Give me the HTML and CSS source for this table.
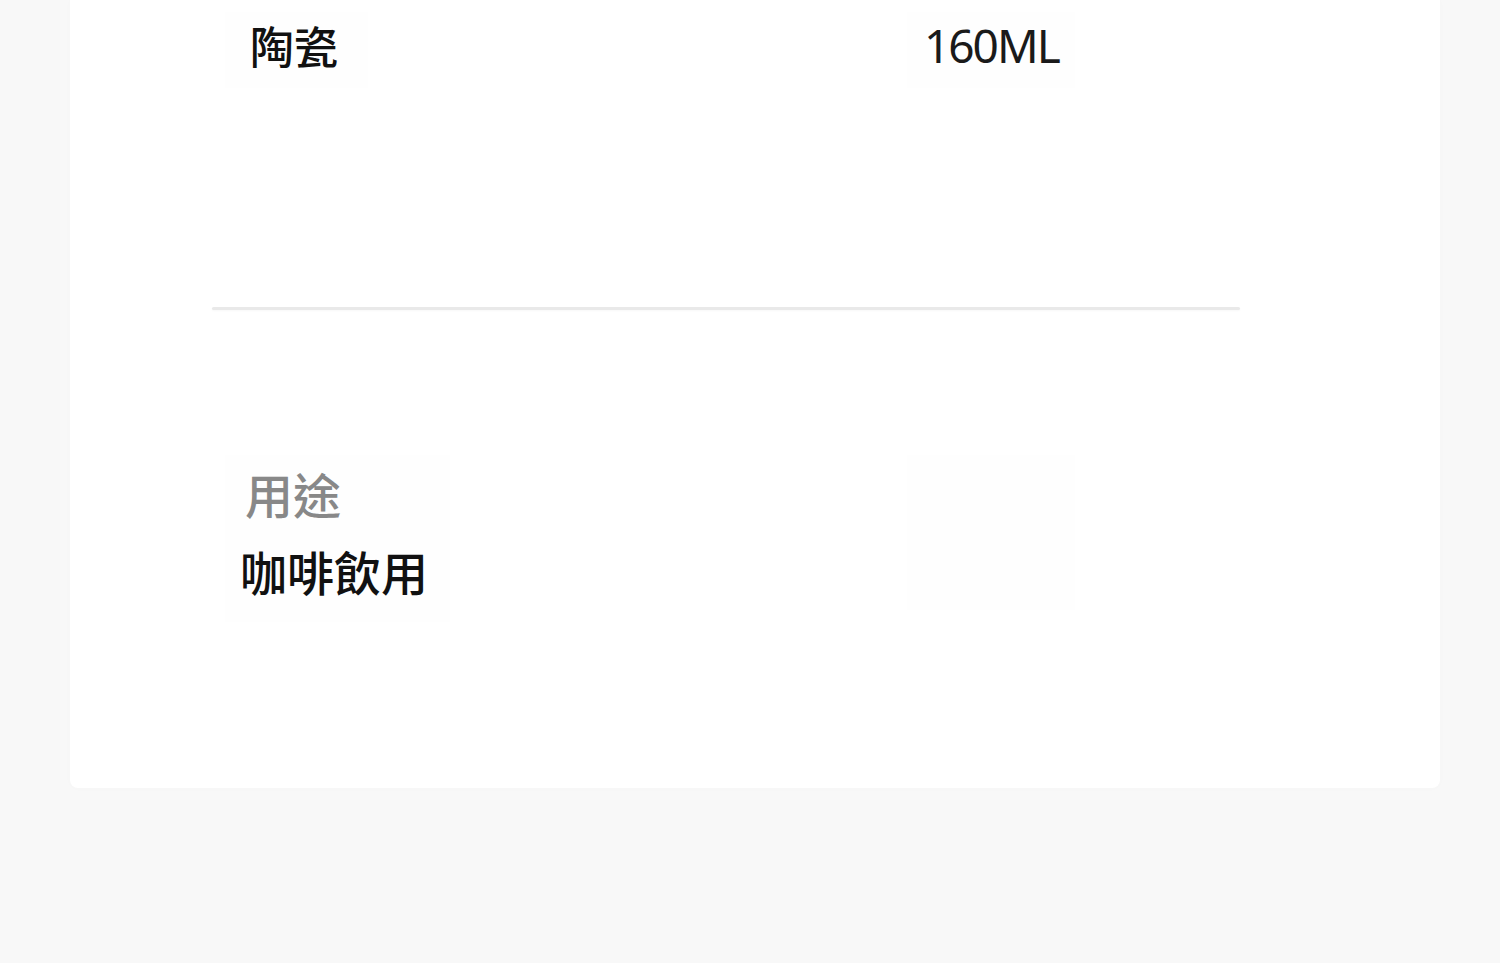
FILE: index.html
```html
<!DOCTYPE html>
<html lang="zh-Hant">
<head>
<meta charset="utf-8">
<title>商品規格</title>
<link rel="stylesheet" href="styles.css">
</head>
<body>
<div class="page">
  <div class="card">
    <div class="row row-top">
      <div class="cell cell-material"><span class="value-dark">陶瓷</span></div>
      <div class="cell cell-volume"><span class="value-num">160ML</span></div>
    </div>
    <div class="divider"></div>
    <div class="row row-bottom">
      <div class="cell cell-usage">
        <span class="label">用途</span>
        <span class="value-use">咖啡飲用</span>
      </div>
      <div class="cell cell-blank"></div>
    </div>
  </div>
</div>
</body>
</html>
```
FILE: styles.css
```css
html, body {
  margin: 0;
  padding: 0;
}
body {
  background: #f8f8f8;
  font-family: "Noto Sans", "Noto Sans CJK TC", sans-serif;
  color: #111;
}
.page {
  width: 1500px;
  height: 963px;
  overflow: hidden;
}
.card {
  margin-left: 70px;
  width: 1370px;
  height: 788px;
  box-sizing: border-box;
  background: #fff;
  border-radius: 0 0 8px 8px;
  box-shadow: 0 0 8px rgba(0, 0, 0, 0.015);
  padding: 12px 0 0 142px;
}
.row {
  display: flex;
}
.cell {
  margin-left: 13px;
  box-sizing: border-box;
  background: #fefefe;
}
.cell-material {
  width: 143px;
  height: 76px;
  display: flex;
  align-items: center;
  padding: 0 0 10px 25px;
}
.cell-volume {
  margin-left: 539px;
  width: 168px;
  height: 76px;
  display: flex;
  align-items: center;
  padding: 0 0 10px 17px;
}
.value-dark {
  font-family: "Noto Sans CJK TC", sans-serif;
  font-size: 44px;
  font-weight: 500;
  line-height: 1;
  color: #111;
}
.value-num {
  font-family: "Noto Sans", sans-serif;
  font-size: 46px;
  font-weight: 400;
  letter-spacing: -2px;
  line-height: 1;
  color: #1a1a1a;
}
.divider {
  margin-top: 219px;
  width: 1028px;
  height: 3px;
  background: #e9e9e9;
  box-shadow: 0 1px 2px rgba(0, 0, 0, 0.03);
  border-radius: 2px;
}
.row-bottom {
  margin-top: 145px;
}
.cell-usage {
  width: 225px;
  height: 167px;
  display: flex;
  flex-direction: column;
  padding: 14px 0 0 20px;
}
.label {
  font-family: "Noto Sans CJK TC", sans-serif;
  font-size: 48px;
  font-weight: 500;
  line-height: 48px;
  color: #888;
}
.value-use {
  font-family: "Noto Sans CJK TC", sans-serif;
  font-size: 47px;
  font-weight: 500;
  line-height: 47px;
  color: #111;
  margin-top: 30px;
  margin-left: -5px;
}
.cell-blank {
  margin-left: 457px;
  width: 168px;
  height: 155px;
}
```
